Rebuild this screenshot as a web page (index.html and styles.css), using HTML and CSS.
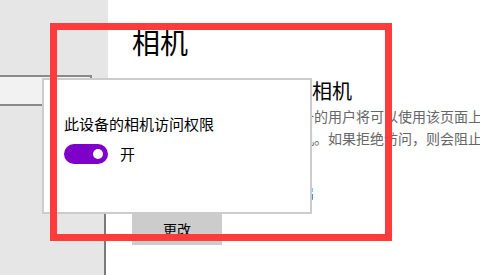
FILE: index.html
```html
<!DOCTYPE html>
<html lang="zh-CN">
<head>
    <meta charset="UTF-8">
    <title>相机</title>
    <link rel="stylesheet" href="styles.css">
</head>
<body>

    <!-- Left navigation pane -->
    <div class="sidebar">
        <div class="sidebar-top">
            <div class="search"></div>
        </div>
        <div class="sidebar-bottom">
            <div class="pane"></div>
        </div>
    </div>

    <!-- Settings page -->
    <div class="main">
        <h1>相机</h1>
        <h2>允许访问此设备上的相机</h2>
        <p class="desc">如果允许访问，则使用此设备的用户将可以使用该页面上的设置选择应用能否访问相机。如果拒绝访问，则会阻止 Windows 应用访问相机。</p>
        <p class="status">此设备的相机访问权限已开启</p>
        <button class="change-btn">更改</button>
    </div>

    <!-- Flyout opened by the button -->
    <div class="flyout">
        <div class="flyout-title">此设备的相机访问权限</div>
        <div class="toggle-row">
            <span class="toggle"><span class="thumb"></span></span>
            <span class="toggle-label">开</span>
        </div>
    </div>

    <!-- Annotation frame -->
    <div class="highlight"></div>

</body>
</html>
```

FILE: styles.css
```css
/* Reset and full window */
body, html {
    margin: 0;
    padding: 0;
}

body {
    position: relative;
    display: flex;
    width: 480px;
    height: 275px;
    overflow: hidden;
    background-color: #fff;
    color: #000;
    font-family: "Noto Sans CJK SC", "Noto Sans", sans-serif;
}

/* Navigation pane */
.sidebar {
    display: flex;
    flex-direction: column;
    width: 108px;
    flex-shrink: 0;
}

.sidebar-top {
    height: 213px;
    padding-top: 75px;
    box-sizing: border-box;
    background-color: #e6e6e6;
}

.sidebar .search {
    margin-left: -10px;
    width: 102px;
    height: 31px;
    box-sizing: border-box;
    border: 2px solid #8a8a8a;
    background-color: #f2f2f2;
}

.sidebar-bottom {
    flex: 1;
    background-color: #fff;
}

.sidebar .pane {
    width: 104px;
    height: 100%;
    background-color: #e6e6e6;
    border-right: 2px solid #7a7a7a;
}

/* Page content */
.main {
    flex: 1;
    padding: 24px 0 0 24px;
}

.main h1 {
    margin: 0;
    font-size: 28px;
    font-weight: normal;
    line-height: 36px;
}

.main h2 {
    margin: 17px 0 0;
    font-size: 20px;
    font-weight: normal;
    line-height: 28px;
}

.main .desc {
    width: 350px;
    margin: 0;
    font-size: 14px;
    line-height: 22px;
    color: #666;
}

.main .status {
    margin: 10px 0 0;
    font-size: 14px;
    line-height: 22px;
    white-space: nowrap;
}

.change-btn {
    display: block;
    margin-top: 10px;
    width: 90px;
    height: 32px;
    border: none;
    background-color: #ccc;
    color: #000;
    font-family: inherit;
    font-size: 14px;
}

/* Flyout */
.flyout {
    position: absolute;
    left: 42px;
    top: 78px;
    width: 270px;
    height: 136px;
    box-sizing: border-box;
    padding: 34px 20px 0;
    border: 2px solid #ccc;
    background-color: #fff;
}

.flyout-title {
    font-size: 15px;
    line-height: 20px;
}

.toggle-row {
    display: flex;
    align-items: center;
    gap: 12px;
    margin-top: 10px;
}

.toggle {
    position: relative;
    display: block;
    width: 44px;
    height: 20px;
    border-radius: 10px;
    background-color: #7f00c8;
}

.toggle .thumb {
    position: absolute;
    right: 5px;
    top: 5px;
    width: 10px;
    height: 10px;
    border-radius: 50%;
    background-color: #fff;
}

.toggle-label {
    font-size: 15px;
    line-height: 20px;
}

/* Red annotation frame */
.highlight {
    position: absolute;
    left: 50px;
    top: 23px;
    width: 342px;
    height: 218px;
    box-sizing: border-box;
    border: 7px solid #ff3b3b;
}
```
